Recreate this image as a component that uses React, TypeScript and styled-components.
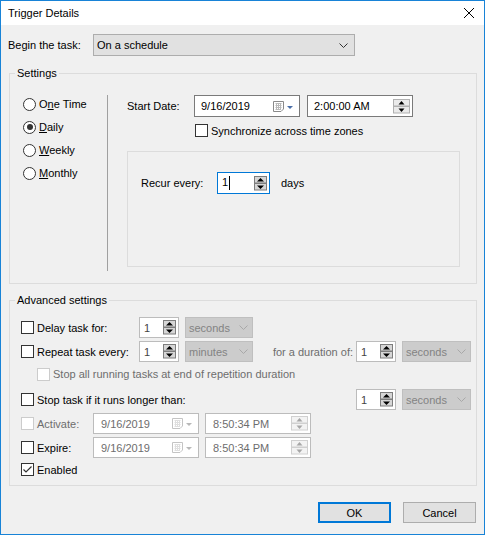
import React from "react";
import styled, { createGlobalStyle } from "styled-components";

const GlobalStyle = createGlobalStyle`
  html, body { margin: 0; padding: 0; background: #fff; }
  body {
    font-family: "Liberation Sans", Arial, sans-serif;
    font-size: 11px;
    color: #000;
  }
  * { box-sizing: border-box; }
`;

const Window = styled.div`
  width: 485px;
  height: 535px;
  border: 1px solid #1883d7;
  display: flex;
  flex-direction: column;
  background: #f0f0f0;
`;

const TitleBar = styled.div`
  height: 24px;
  flex-shrink: 0;
  background: #fff;
  display: flex;
  align-items: center;
  justify-content: space-between;
  padding: 0 10px 0 7px;
`;

const Body = styled.div`
  flex: 1;
  padding: 0 6px 0 7px;
  display: flex;
  flex-direction: column;
`;

const BeginRow = styled.div`
  margin-top: 9px;
  height: 22px;
  display: flex;
  align-items: center;
`;

const FieldLabel = styled.span<{ $width: number; $muted?: boolean }>`
  width: ${(p) => p.$width}px;
  flex-shrink: 0;
  white-space: nowrap;
  color: ${(p) => (p.$muted ? "#6d6d6d" : "#000")};
`;

const Group = styled.fieldset<{ $top: number }>`
  margin: ${(p) => p.$top}px 0 0 1px;
  width: 468px;
  min-width: 0;
  padding: 0;
  border: 1px solid #dcdcdc;
`;

const Legend = styled.legend`
  margin-left: 5px;
  padding: 0 2px;
  height: 14px;
  line-height: 14px;
`;

const SettingsInner = styled.div`
  height: 203px;
  padding-top: 15px;
  display: flex;
  align-items: flex-start;
`;

const RadioColumn = styled.div`
  width: 97px;
  padding-left: 13px;
  display: flex;
  flex-direction: column;
  gap: 5px;
`;

const RadioRow = styled.label`
  height: 18px;
  display: flex;
  align-items: center;
  gap: 3px;
`;

const RadioCircle = styled.span<{ $checked?: boolean }>`
  width: 13px;
  height: 13px;
  border: 1px solid #333;
  border-radius: 50%;
  background: #fff;
  display: flex;
  align-items: center;
  justify-content: center;
  &::after {
    content: "";
    width: 6px;
    height: 6px;
    border-radius: 50%;
    background: ${(p) => (p.$checked ? "#333" : "transparent")};
  }
`;

const Mnemonic = styled.span`
  text-decoration: underline;
`;

const Separator = styled.div`
  width: 1px;
  height: 176px;
  background: #a0a0a0;
  flex-shrink: 0;
`;

const RightColumn = styled.div`
  margin-left: 19px;
  width: 333px;
  display: flex;
  flex-direction: column;
`;

const Row = styled.div<{ $height?: number; $top?: number; $indent?: number }>`
  display: flex;
  align-items: center;
  height: ${(p) => p.$height ?? 21}px;
  margin-top: ${(p) => p.$top ?? 0}px;
  padding-left: ${(p) => p.$indent ?? 0}px;
`;

const RecurBox = styled.div`
  margin-top: 14px;
  width: 333px;
  height: 116px;
  border: 1px solid #dcdcdc;
  padding: 20px 0 0 13px;
`;

const AdvancedInner = styled.div`
  padding: 10px 5px 7px 11px;
  display: flex;
  flex-direction: column;
`;

const borderTone = {
  normal: "#7a7a7a",
  focus: "#0078d7",
  muted: "#bcbcbc",
};

const Box = styled.div<{
  $width: number;
  $height?: number;
  $tone?: keyof typeof borderTone;
  $pad?: number;
  $gap?: number;
}>`
  display: flex;
  align-items: center;
  flex-shrink: 0;
  width: ${(p) => p.$width}px;
  height: ${(p) => p.$height ?? 21}px;
  margin-left: ${(p) => p.$gap ?? 0}px;
  border: 1px solid ${(p) => borderTone[p.$tone ?? "normal"]};
  background: #fff;
  padding: 0 2px 0 ${(p) => p.$pad ?? 5}px;
`;

const BoxText = styled.span<{ $tone?: "dark" | "muted" | "soft" }>`
  flex: 1;
  white-space: nowrap;
  color: ${(p) =>
    p.$tone === "muted" ? "#6d6d6d" : p.$tone === "soft" ? "#444" : "#000"};
`;

const Caret = styled.span`
  display: inline-block;
  width: 1px;
  height: 14px;
  background: #000;
  vertical-align: middle;
  margin-left: 1px;
`;

const Combo = styled.div<{ $width: number; $height?: number; $disabled?: boolean; $gap?: number }>`
  display: flex;
  align-items: center;
  justify-content: space-between;
  flex-shrink: 0;
  width: ${(p) => p.$width}px;
  height: ${(p) => p.$height ?? 21}px;
  margin-left: ${(p) => p.$gap ?? 0}px;
  border: 1px solid ${(p) => (p.$disabled ? "#bfbfbf" : "#adadad")};
  background: ${(p) => (p.$disabled ? "#cccccc" : "#e1e1e1")};
  color: ${(p) => (p.$disabled ? "#838383" : "#000")};
  padding: 0 ${(p) => (p.$disabled ? 4 : 6)}px 0 3px;
`;

const CheckField = styled.label<{ $width?: number; $muted?: boolean }>`
  display: flex;
  align-items: center;
  gap: 3px;
  flex-shrink: 0;
  width: ${(p) => (p.$width ? `${p.$width}px` : "auto")};
  color: ${(p) => (p.$muted ? "#6d6d6d" : "#000")};
  white-space: nowrap;
`;

const CheckSquare = styled.span<{ $disabled?: boolean }>`
  width: 13px;
  height: 13px;
  flex-shrink: 0;
  border: 1px solid ${(p) => (p.$disabled ? "#cccccc" : "#333")};
  background: #fff;
  display: flex;
`;

const MutedText = styled.span<{ $gap?: number }>`
  color: #6d6d6d;
  white-space: nowrap;
  margin-right: ${(p) => p.$gap ?? 0}px;
`;

const RightGroup = styled.div`
  margin-left: auto;
  display: flex;
  align-items: center;
`;

const Suffix = styled.span`
  margin-left: 11px;
`;

const ButtonRow = styled.div`
  margin-top: 16px;
  margin-right: 2px;
  display: flex;
  justify-content: flex-end;
  gap: 12px;
`;

const Button = styled.button<{ $primary?: boolean }>`
  width: 73px;
  height: 21px;
  padding: 0;
  font: inherit;
  color: #000;
  background: #e1e1e1;
  border: ${(p) => (p.$primary ? "2px solid #0078d7" : "1px solid #adadad")};
`;

type SpinVariant = "strong" | "light" | "disabled";

const spinColors: Record<SpinVariant, { fill: string; stroke: string; arrow: string }> = {
  strong: { fill: "#d6d6d6", stroke: "#7d7d7d", arrow: "#000" },
  light: { fill: "#eaeaea", stroke: "#b0b0b0", arrow: "#000" },
  disabled: { fill: "#f3f3f3", stroke: "#d0d0d0", arrow: "#a6a6a6" },
};

const SpinArrows = ({ variant = "strong", width = 13 }: { variant?: SpinVariant; width?: number }) => {
  const c = spinColors[variant];
  const mid = width / 2;
  const half = variant === "strong" ? 3.5 : 3;
  return (
    <svg width={width} height={15} viewBox={`0 0 ${width} 15`}>
      <rect x={0.5} y={0.5} width={width - 1} height={6.5} fill={c.fill} stroke={c.stroke} />
      <rect x={0.5} y={7.5} width={width - 1} height={6.5} fill={c.fill} stroke={c.stroke} />
      <path d={`M${mid - half} 5.5 L${mid + half} 5.5 L${mid} 2 Z`} fill={c.arrow} />
      <path d={`M${mid - half} 9.5 L${mid + half} 9.5 L${mid} 13 Z`} fill={c.arrow} />
    </svg>
  );
};

const Chevron = ({ color }: { color: string }) => (
  <svg width={9} height={5} viewBox="0 0 9 5">
    <polyline points="0.5,0.5 4.5,4.5 8.5,0.5" fill="none" stroke={color} />
  </svg>
);

const CalendarDrop = ({ disabled }: { disabled?: boolean }) => {
  const edge = disabled ? "#c4c4c4" : "#8a8a8a";
  const grid = disabled ? "#dedede" : "#b9b9b9";
  const arrow = disabled ? "#b8b8b8" : "#4a6ea8";
  return (
    <svg width={21} height={11} viewBox="0 0 21 11">
      <path d="M0.5 0.5 H10.5 V8 L8 10.5 H0.5 Z" fill="#fff" stroke={edge} />
      <path d="M2.5 2.5 H8.5 M2.5 4.5 H8.5 M2.5 6.5 H8.5 M2.5 8.5 H7" stroke={grid} />
      <path d="M3.5 2 V9 M5.5 2 V9 M7.5 2 V9" stroke={grid} />
      <path d="M14 5 L20 5 L17 8 Z" fill={arrow} />
    </svg>
  );
};

const CheckMark = () => (
  <svg width={11} height={11} viewBox="0 0 11 11">
    <polyline points="1.5,5.5 4,8 9.5,2.5" fill="none" stroke="#333" strokeWidth={1.2} />
  </svg>
);

const CloseIcon = () => (
  <svg width={10} height={10} viewBox="0 0 10 10">
    <path d="M0 0 L10 10 M10 0 L0 10" stroke="#000" strokeWidth={1} />
  </svg>
);

const Checkbox = ({ checked, disabled }: { checked?: boolean; disabled?: boolean }) => (
  <CheckSquare $disabled={disabled}>{checked ? <CheckMark /> : null}</CheckSquare>
);

const DatePicker = ({ value, disabled, gap }: { value: string; disabled?: boolean; gap?: number }) => (
  <Box $width={106} $height={disabled ? 21 : 22} $tone={disabled ? "muted" : "normal"} $pad={disabled ? 7 : 6} $gap={gap}>
    <BoxText $tone={disabled ? "muted" : "dark"}>{value}</BoxText>
    <span style={{ marginRight: 3, display: "flex" }}>
      <CalendarDrop disabled={disabled} />
    </span>
  </Box>
);

const TimePicker = ({ value, disabled, gap }: { value: string; disabled?: boolean; gap?: number }) => (
  <Box $width={106} $height={disabled ? 21 : 22} $tone={disabled ? "muted" : "normal"} $pad={disabled ? 7 : 6} $gap={gap}>
    <BoxText $tone={disabled ? "muted" : "dark"}>{value}</BoxText>
    <SpinArrows variant={disabled ? "disabled" : "light"} width={17} />
  </Box>
);

const NumberSpin = ({ value = "1" }: { value?: string }) => (
  <Box $width={40} $tone="muted" $pad={4}>
    <BoxText $tone="soft">{value}</BoxText>
    <SpinArrows />
  </Box>
);

const Select = ({ value, width, gap }: { value: string; width: number; gap?: number }) => (
  <Combo $width={width} $disabled $gap={gap}>
    <span>{value}</span>
    <Chevron color="#a8a8a8" />
  </Combo>
);

const radios = [
  { pre: "O", key: "n", post: "e Time", checked: false },
  { pre: "", key: "D", post: "aily", checked: true },
  { pre: "", key: "W", post: "eekly", checked: false },
  { pre: "", key: "M", post: "onthly", checked: false },
];

export default function App() {
  return (
    <>
      <GlobalStyle />
      <Window>
        <TitleBar>
          <span>Trigger Details</span>
          <CloseIcon />
        </TitleBar>
        <Body>
          <BeginRow>
            <FieldLabel $width={85}>Begin the task:</FieldLabel>
            <Combo $width={262} $height={22}>
              <span>On a schedule</span>
              <Chevron color="#333" />
            </Combo>
          </BeginRow>

          <Group $top={10}>
            <Legend>Settings</Legend>
            <SettingsInner>
              <RadioColumn>
                {radios.map((r) => (
                  <RadioRow key={r.key}>
                    <RadioCircle $checked={r.checked} />
                    <span>
                      {r.pre}
                      <Mnemonic>{r.key}</Mnemonic>
                      {r.post}
                    </span>
                  </RadioRow>
                ))}
              </RadioColumn>
              <Separator />
              <RightColumn>
                <Row $height={22}>
                  <FieldLabel $width={67}>Start Date:</FieldLabel>
                  <DatePicker value="9/16/2019" />
                  <TimePicker value="2:00:00 AM" gap={7} />
                </Row>
                <Row $height={13} $top={7} $indent={68}>
                  <CheckField>
                    <Checkbox />
                    Synchronize across time zones
                  </CheckField>
                </Row>
                <RecurBox>
                  <Row $height={22}>
                    <FieldLabel $width={76}>Recur every:</FieldLabel>
                    <Box $width={53} $height={22} $tone="focus" $pad={4}>
                      <BoxText>
                        1<Caret />
                      </BoxText>
                      <SpinArrows />
                    </Box>
                    <Suffix>days</Suffix>
                  </Row>
                </RecurBox>
              </RightColumn>
            </SettingsInner>
          </Group>

          <Group $top={9}>
            <Legend>Advanced settings</Legend>
            <AdvancedInner>
              <Row>
                <CheckField $width={118}>
                  <Checkbox />
                  Delay task for:
                </CheckField>
                <NumberSpin />
                <Select value="seconds" width={68} gap={6} />
              </Row>
              <Row $top={3}>
                <CheckField $width={118}>
                  <Checkbox />
                  Repeat task every:
                </CheckField>
                <NumberSpin />
                <Select value="minutes" width={68} gap={6} />
                <RightGroup>
                  <MutedText $gap={3}>for a duration of:</MutedText>
                  <NumberSpin />
                  <Select value="seconds" width={69} gap={6} />
                </RightGroup>
              </Row>
              <Row $height={24} $indent={16}>
                <CheckField $muted>
                  <Checkbox disabled />
                  Stop all running tasks at end of repetition duration
                </CheckField>
              </Row>
              <Row $top={3}>
                <CheckField>
                  <Checkbox />
                  Stop task if it runs longer than:
                </CheckField>
                <RightGroup>
                  <NumberSpin />
                  <Select value="seconds" width={69} gap={6} />
                </RightGroup>
              </Row>
              <Row $top={3}>
                <CheckField $width={72} $muted>
                  <Checkbox disabled />
                  Activate:
                </CheckField>
                <DatePicker value="9/16/2019" disabled />
                <TimePicker value="8:50:34 PM" disabled gap={6} />
              </Row>
              <Row $top={3}>
                <CheckField $width={72}>
                  <Checkbox />
                  Expire:
                </CheckField>
                <DatePicker value="9/16/2019" disabled />
                <TimePicker value="8:50:34 PM" disabled gap={6} />
              </Row>
              <Row $top={3} $height={17}>
                <CheckField>
                  <Checkbox checked />
                  Enabled
                </CheckField>
              </Row>
            </AdvancedInner>
          </Group>

          <ButtonRow>
            <Button $primary>OK</Button>
            <Button>Cancel</Button>
          </ButtonRow>
        </Body>
      </Window>
    </>
  );
}
